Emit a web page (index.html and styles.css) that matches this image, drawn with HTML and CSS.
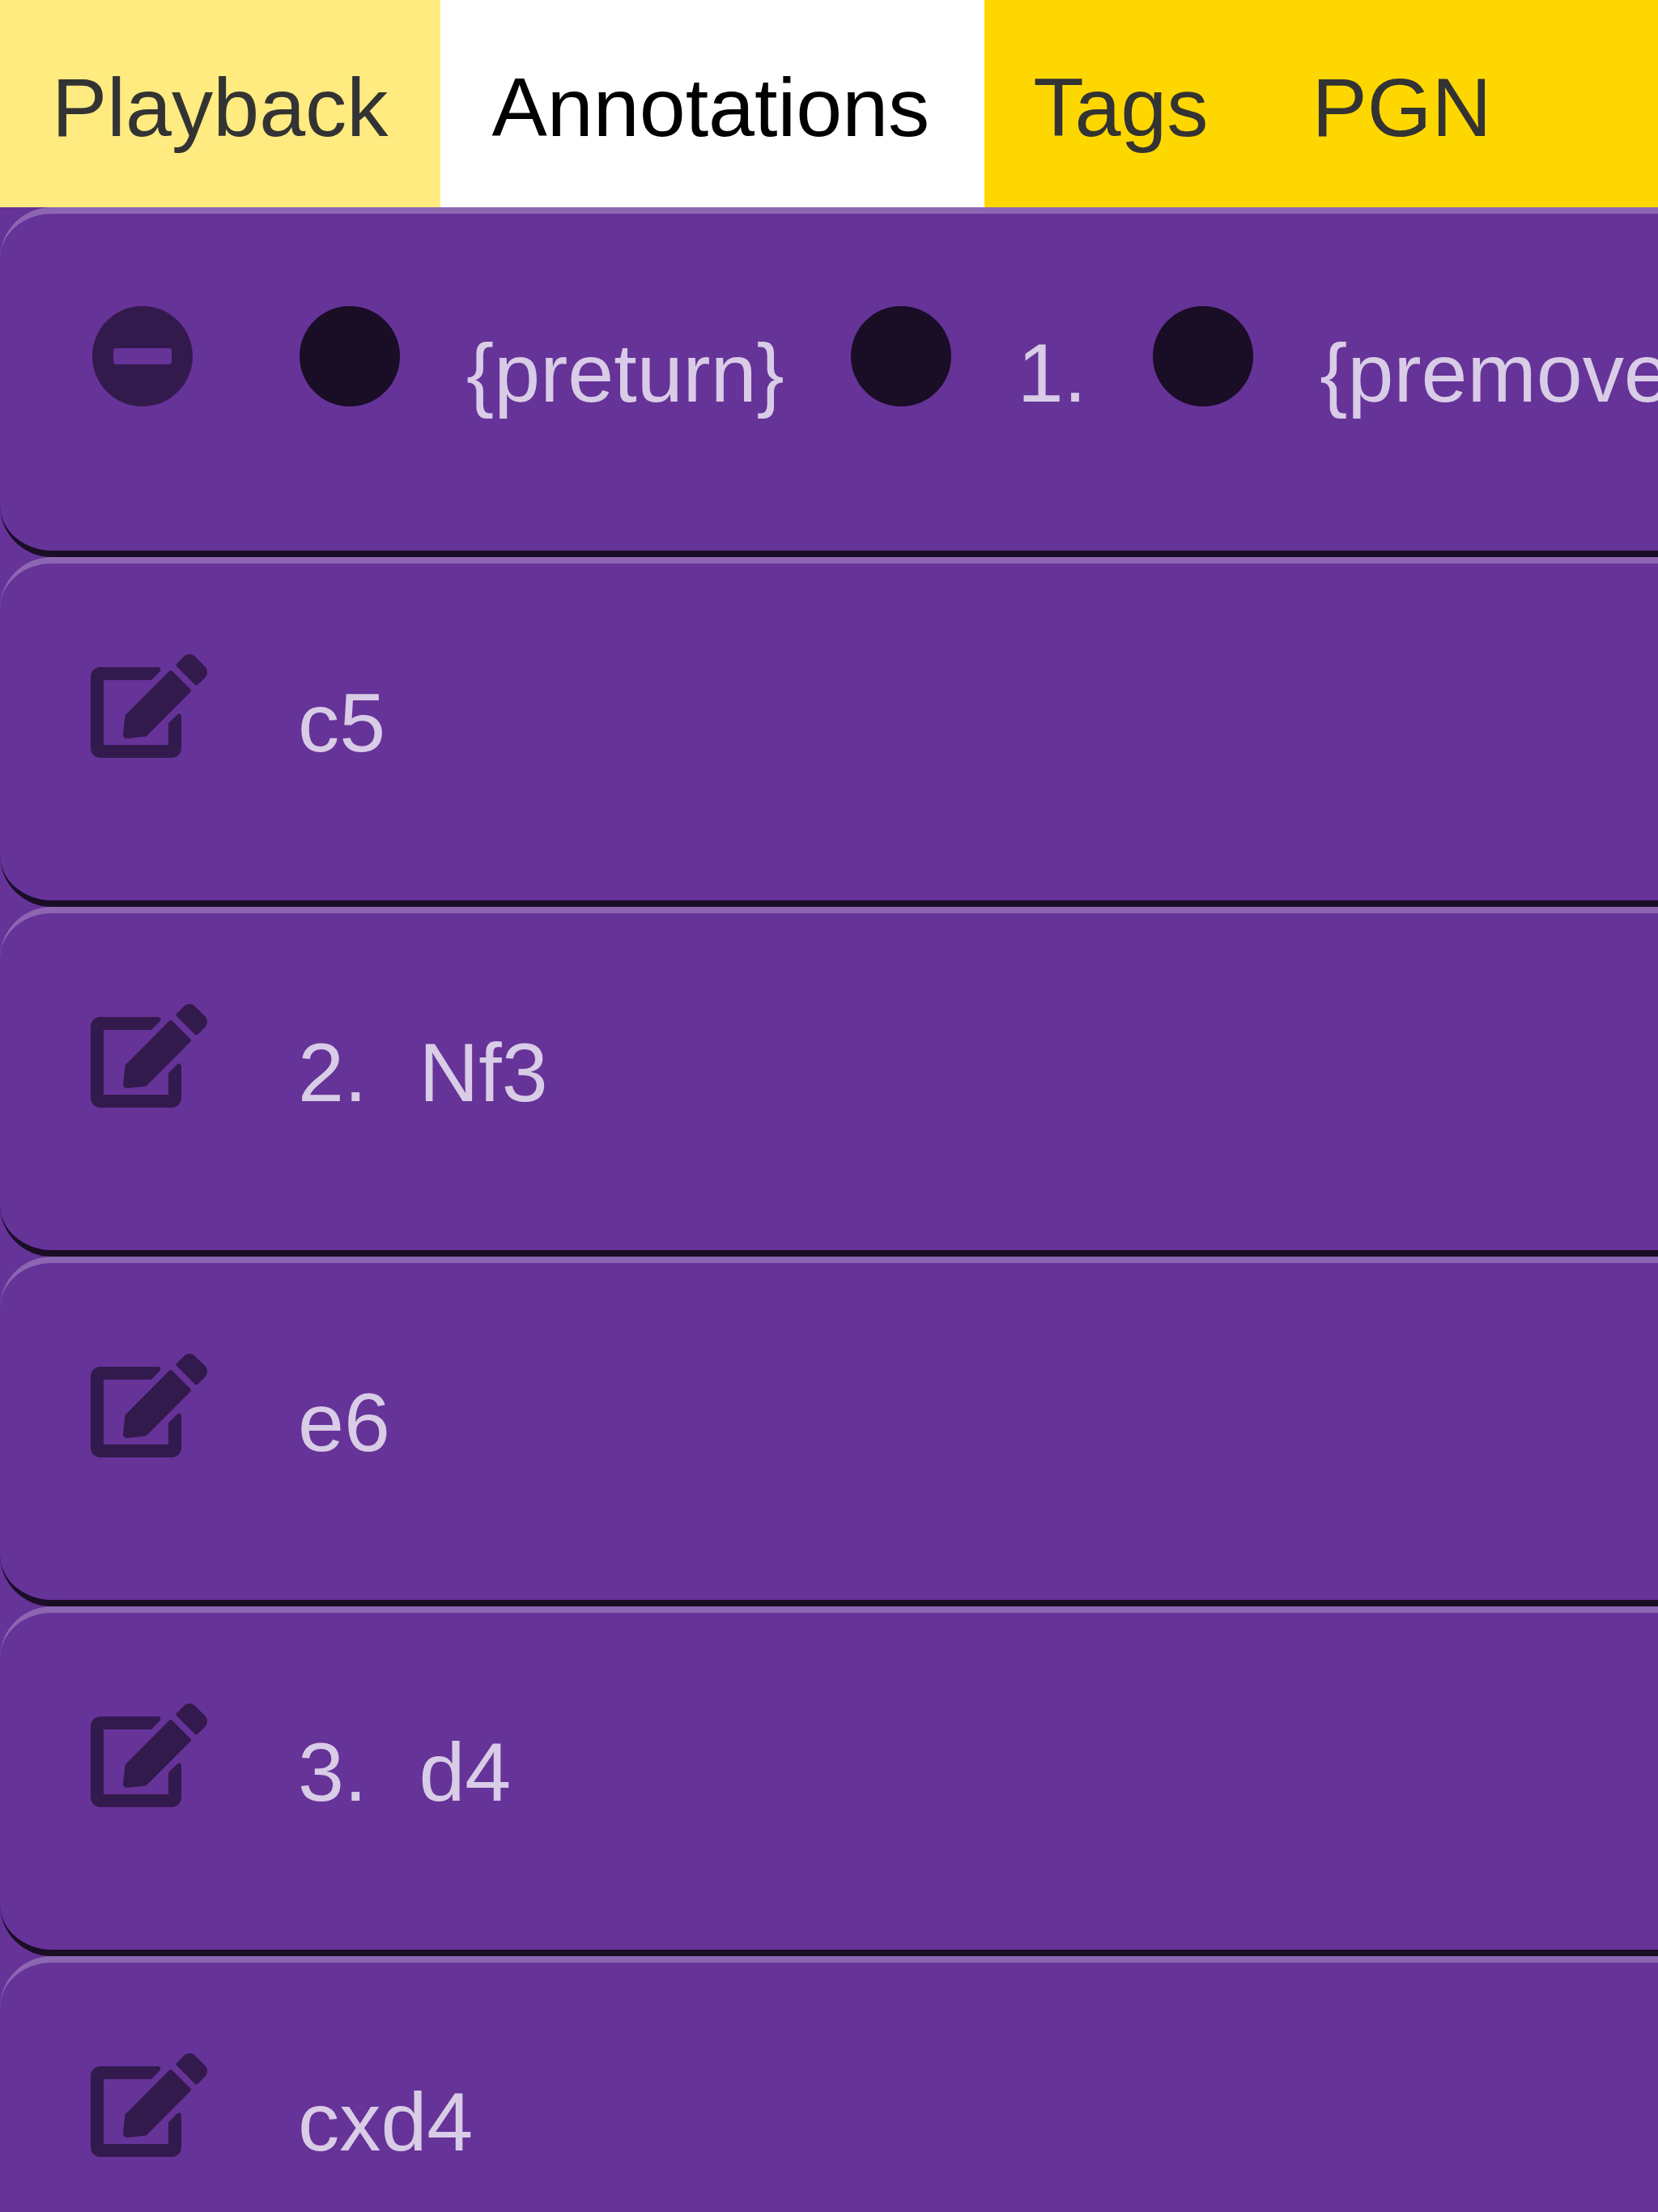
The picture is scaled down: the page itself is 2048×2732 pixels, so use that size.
FILE: index.html
```
<!DOCTYPE html>
<html lang="en">
<head>
<meta charset="utf-8">
<title>Annotations</title>
<link rel="stylesheet" href="styles.css">
</head>
<body>
<svg class="sprite" aria-hidden="true">
  <symbol id="edit" viewBox="0 0 576 512"><path d="M402.600 83.200l90.200 90.200c3.800 3.800 3.800 10 0 13.800L274.400 405.600l-92.800 10.300c-12.400 1.400-22.900-9.100-21.500-21.500l10.300-92.800L388.800 83.200c3.800-3.800 10-3.800 13.800 0zm162-22.900l-48.800-48.800c-15.200-15.200-39.900-15.200-55.200 0l-35.400 35.400c-3.800 3.800-3.800 10 0 13.800l90.200 90.200c3.800 3.800 10 3.800 13.800 0l35.400-35.400c15.200-15.300 15.200-40 0-55.200zM384 346.200V448H64V128h229.800c3.200 0 6.200-1.300 8.500-3.500l40-40c7.600-7.600 2.200-20.500-8.500-20.500H48C21.500 64 0 85.500 0 112v352c0 26.500 21.500 48 48 48h352c26.500 0 48-21.500 48-48V306.200c0-10.700-12.900-16-20.500-8.500l-40 40c-2.200 2.300-3.500 5.300-3.500 8.500z"/></symbol>
  <symbol id="minus" viewBox="0 0 512 512"><path d="M256 8C119 8 8 119 8 256s111 248 248 248 248-111 248-248S393 8 256 8zM124 296c-6.600 0-12-5.400-12-12v-56c0-6.600 5.400-12 12-12h264c6.600 0 12 5.400 12 12v56c0 6.600-5.400 12-12 12H124z"/></symbol>
  <symbol id="circle" viewBox="0 0 512 512"><path d="M256 8C119 8 8 119 8 256s111 248 248 248 248-111 248-248S393 8 256 8z"/></symbol>
</svg>
<nav class="tabs">
  <div class="tab tab-hover">Playback</div>
  <div class="tab tab-active">Annotations</div>
  <div class="tab tab-tags">Tags</div>
  <div class="tab">PGN</div>
</nav>
<main class="moves">
  <div class="row">
    <svg class="action"><use href="#minus"/></svg>
    <div class="editor">
      <svg class="dot"><use href="#circle"/></svg>
      <span class="text">{preturn}</span>
      <svg class="dot"><use href="#circle"/></svg>
      <span class="text">1.</span>
      <svg class="dot"><use href="#circle"/></svg>
      <span class="text">{premove}</span>
    </div>
  </div>
  <div class="row"><svg class="action edit"><use href="#edit"/></svg><span class="text">c5</span></div>
  <div class="row"><svg class="action edit"><use href="#edit"/></svg><span class="text number">2.</span><span class="text">Nf3</span></div>
  <div class="row"><svg class="action edit"><use href="#edit"/></svg><span class="text">e6</span></div>
  <div class="row"><svg class="action edit"><use href="#edit"/></svg><span class="text number">3.</span><span class="text">d4</span></div>
  <div class="row"><svg class="action edit"><use href="#edit"/></svg><span class="text">cxd4</span></div>
</main>
</body>
</html>
```
FILE: styles.css
```
* { box-sizing: border-box; }
html, body { height: 100%; }
body {
  margin: 0;
  overflow: hidden;
  background: #663399;
  font-family: "Liberation Sans", Arial, sans-serif;
  font-size: 102.4px;
}
.sprite { display: none; }
.tabs {
  display: flex;
  height: 256px;
  background: #ffd700;
  color: #333;
}
.tab {
  flex: none;
  padding: 0 64px;
  line-height: 266px;
  white-space: nowrap;
}
.tab-hover { width: 544px; background: #ffeb80; }
.tab-active { width: 672px; padding-left: 63.5px; background: #fff; color: #000; }
.tab-tags { padding-left: 60.2px; }
.row {
  display: flex;
  align-items: flex-start;
  height: 432px;
  padding: 112px 0 0 112px;
  border-top: 8px solid #8c66b2;
  border-bottom: 8px solid #1a0d26;
  border-radius: 64px 0 0 64px;
  overflow: hidden;
  white-space: nowrap;
}
.action {
  flex: none;
  width: 128px;
  height: 128px;
  margin-right: 128px;
  fill: #331a4d;
}
.edit { width: 144px; margin-right: 112px; }
.editor { display: flex; gap: 80px; }
.dot {
  flex: none;
  width: 128px;
  height: 128px;
  fill: #1a0d26;
}
.text {
  padding-top: 26px;
  line-height: 117px;
  color: #d9cce6;
}
.number { margin-right: 64px; }
```
